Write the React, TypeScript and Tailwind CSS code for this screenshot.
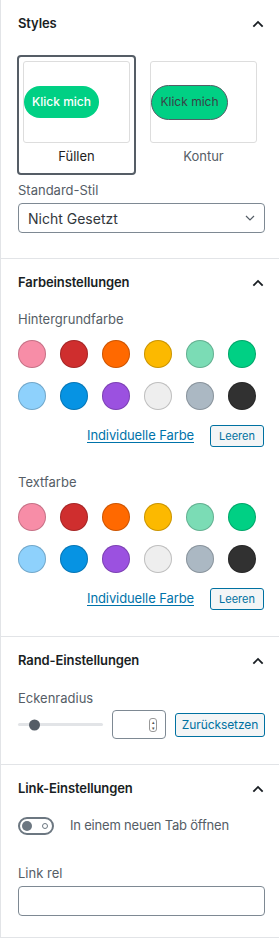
import { useState } from 'react';

const palette = [
    '#f78da7', '#cf2e2e', '#ff6900', '#fcb900', '#7bdcb5', '#00d084',
    '#8ed1fc', '#0693e3', '#9b51e0', '#eeeeee', '#abb8c3', '#313131',
];

function ChevronUp() {
    return (
        <svg width="14" height="14" viewBox="0 0 24 24" className="text-[#191e23]">
            <path d="M4 16.5 L12 8.5 L20 16.5" fill="none" stroke="currentColor" strokeWidth={3.2} />
        </svg>
    );
}

function PanelHeader({ title }: { title: string }) {
    return (
        <div className="h-[47px] flex items-center justify-between pl-[17px] pr-[14px]">
            <h2 className="text-[13px] font-semibold text-[#191e23] tracking-[-0.1px]">{title}</h2>
            <ChevronUp />
        </div>
    );
}

function ColorPicker({ label }: { label: string }) {
    const [selected, setSelected] = useState<string | null>(null);
    return (
        <div>
            <p className="text-[13px] leading-5 text-[#555d66]">{label}</p>
            <div className="grid grid-cols-6 gap-[14px] w-[238px] mt-[11px]">
                {palette.map((c) => (
                    <button
                        key={c}
                        onClick={() => setSelected(c)}
                        className="w-7 h-7 rounded-full shadow-[inset_0_0_0_1px_rgba(0,0,0,0.2)]"
                        style={{ backgroundColor: c, outline: selected === c ? '2px solid #555d66' : undefined }}
                    />
                ))}
            </div>
            <div className="flex items-center justify-end gap-4 mt-[15px] pr-[15px]">
                <a className="text-[13px] text-[#0073aa] underline underline-offset-2 tracking-[-0.1px]">Individuelle Farbe</a>
                <button className="h-[22px] w-[54px] rounded-[3px] border border-[#0071a1] bg-[#f3f5f6] text-[11px] text-[#0071a1]">
                    Leeren
                </button>
            </div>
        </div>
    );
}

export default function App() {
    const [newTab, setNewTab] = useState(false);

    return (
        <div
            className="w-[279px] bg-white border-l border-[#e2e4e7]"
            style={{ fontFamily: 'Inter, "Liberation Sans", sans-serif' }}
        >
            {/* Styles */}
            <div className="h-[259px] border-b border-[#e2e4e7]">
                <PanelHeader title="Styles" />
                <div className="flex gap-2 px-[16px] mt-2">
                    <div className="w-[121px] h-[120px] rounded-[4px] border-2 border-[#555d66] p-1 flex flex-col">
                        <div className="h-[82px] border border-[#dddddd] rounded-[3px] flex items-center">
                            <span className="h-8 w-[75px] rounded-full bg-[#00d084] text-white text-[12px] font-medium flex items-center justify-center">
                                Klick mich
                            </span>
                        </div>
                        <p className="text-[13px] text-[#1e1e1e] text-center mt-[4px]">Füllen</p>
                    </div>
                    <div className="w-[121px] h-[120px] rounded-[4px] border-2 border-transparent p-1 flex flex-col">
                        <div className="h-[82px] border border-[#dddddd] rounded-[3px] flex items-center">
                            <span className="h-[35px] w-[77px] rounded-full bg-[#00d084] border border-[#555d66] text-[#3b4046] text-[12px] flex items-center justify-center">
                                Klick mich
                            </span>
                        </div>
                        <p className="text-[13px] text-[#555d66] text-center mt-[4px]">Kontur</p>
                    </div>
                </div>
                <p className="text-[13px] leading-5 text-[#555d66] pl-[17px] mt-[5px]">Standard-Stil</p>
                <div className="ml-[17px] mt-[3px] w-[247px] h-[30px] border border-[#7e8993] rounded-[4px] flex items-center justify-between pl-[9px] pr-[8px]">
                    <span className="text-[14px] text-[#32373c]">Nicht Gesetzt</span>
                    <svg width="12" height="12" viewBox="0 0 24 24">
                        <path d="M4 8 L12 16 L20 8" fill="none" stroke="#555d66" strokeWidth={2.4} />
                    </svg>
                </div>
            </div>

            {/* Farbeinstellungen */}
            <div className="h-[378px] border-b border-[#e2e4e7]">
                <PanelHeader title="Farbeinstellungen" />
                <div className="pl-[17px] mt-[3px]">
                    <ColorPicker label="Hintergrundfarbe" />
                    <div className="mt-[25px]">
                        <ColorPicker label="Textfarbe" />
                    </div>
                </div>
            </div>

            {/* Rand-Einstellungen */}
            <div className="h-[128px] border-b border-[#e2e4e7]">
                <PanelHeader title="Rand-Einstellungen" />
                <p className="text-[13px] leading-5 text-[#555d66] pl-[17px] mt-[4px]">Eckenradius</p>
                <div className="flex items-center pl-[17px] mt-[2px]">
                    <div className="relative w-[85px] h-[3px] rounded-full bg-[#e2e4e7]">
                        <span className="absolute left-[11px] top-1/2 -translate-y-1/2 w-[11px] h-[11px] rounded-full bg-[#555d66]" />
                    </div>
                    <div className="ml-[9px] w-[54px] h-[29px] border border-[#7e8993] rounded-[4px] flex items-center justify-end pr-[8px]">
                        <span className="w-[8px] h-[14px] rounded-[3px] border border-[#999] flex flex-col items-center justify-center text-[5px] leading-[6px] text-[#555]">
                            <span>▴</span>
                            <span>▾</span>
                        </span>
                    </div>
                    <button className="ml-[9px] h-[24px] w-[90px] rounded-[3px] border border-[#0071a1] bg-[#f3f5f6] text-[12px] text-[#0071a1] tracking-[-0.1px]">
                        Zurücksetzen
                    </button>
                </div>
            </div>

            {/* Link-Einstellungen */}
            <div className="h-[173px] border-b border-[#e2e4e7]">
                <PanelHeader title="Link-Einstellungen" />
                <div className="flex items-center pl-[17px] mt-[4px]">
                    <button
                        onClick={() => setNewTab(!newTab)}
                        className="w-[36px] h-[18px] rounded-full border-2 border-[#6c7781] flex items-center justify-between px-[2px]"
                    >
                        <span className="w-[10px] h-[10px] rounded-full bg-[#6c7781]" />
                        <span className="w-[6px] h-[6px] rounded-full border border-[#6c7781] mr-[2px]" />
                    </button>
                    <span className="ml-4 text-[13px] text-[#555d66] tracking-[-0.2px]">In einem neuen Tab öffnen</span>
                </div>
                <p className="text-[13px] leading-5 text-[#555d66] pl-[17px] mt-[27px]">Link rel</p>
                <input className="block ml-[17px] mt-[3px] w-[247px] h-[30px] border border-[#7e8993] rounded-[4px] px-2 text-[13px]" />
            </div>
        </div>
    );
}
